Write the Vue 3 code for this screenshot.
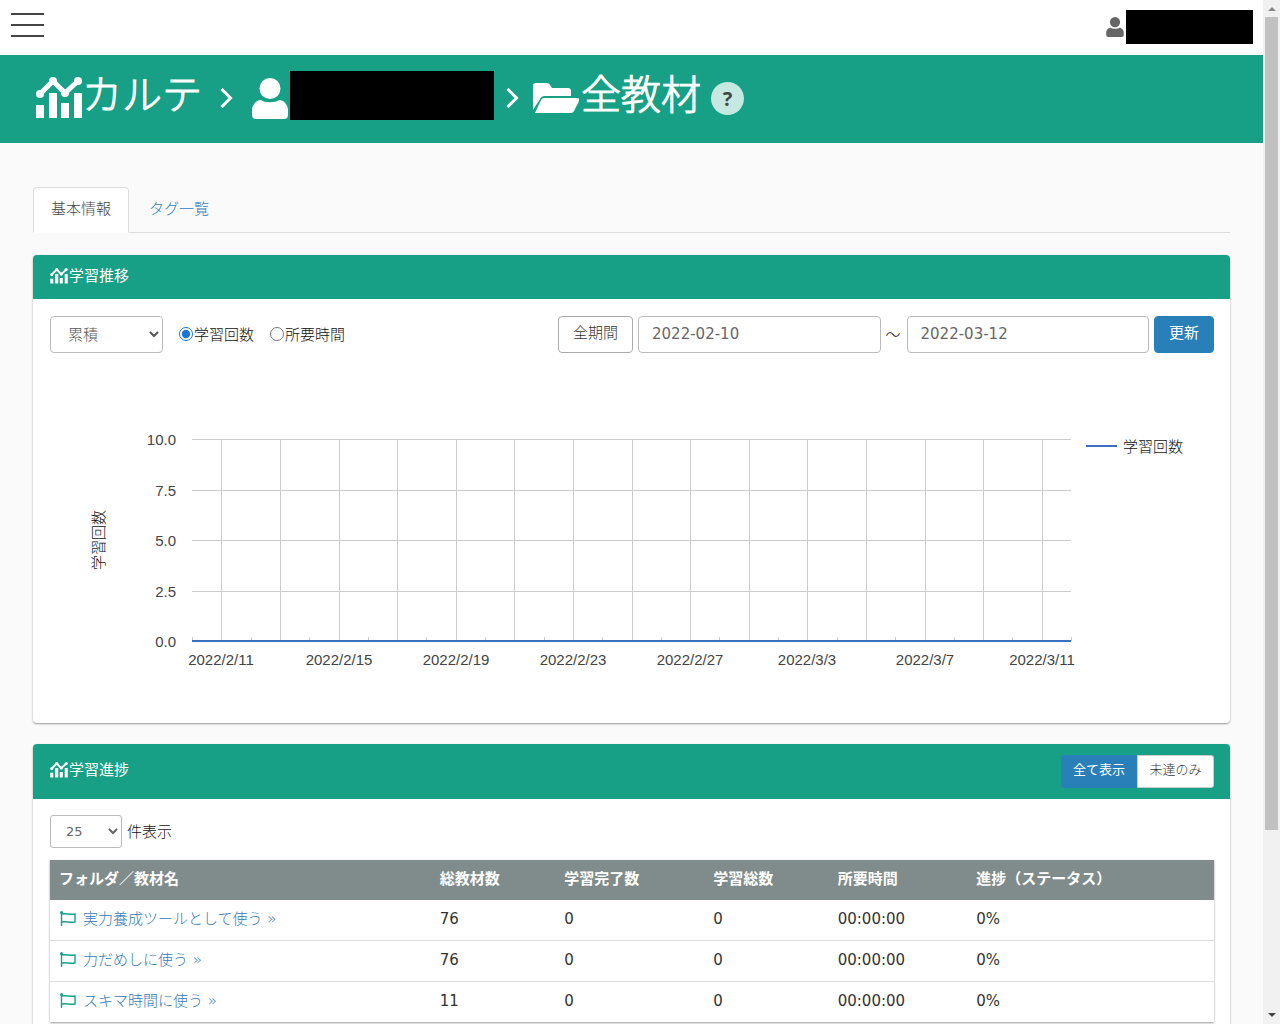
<script setup>
import { ref } from 'vue'

const mode = ref('total')
const metric = ref('count')
const from = ref('2022-02-10')
const to = ref('2022-03-12')
const perPage = ref('25')

const yTicks = ['10.0', '7.5', '5.0', '2.5', '0.0']
const xLabels = ['2022/2/11', '2022/2/15', '2022/2/19', '2022/2/23', '2022/2/27', '2022/3/3', '2022/3/7', '2022/3/11']
const dayX = (day) => Math.round(142 + (879 * day) / 30)
const majorDays = Array.from({ length: 15 }, (_, i) => 1 + i * 2)
const minorDays = Array.from({ length: 16 }, (_, i) => i * 2)
const tickY = [69, 120, 170, 221, 271]

const rows = [
  { name: '実力養成ツールとして使う »', total: 76 },
  { name: '力だめしに使う »', total: 76 },
  { name: 'スキマ時間に使う »', total: 11 }
]
</script>

<template>
  <svg class="defs" aria-hidden="true">
    <symbol id="i-chart" viewBox="0 0 46 42">
      <path d="M4 17 17 4 29 16 42 4" fill="none" stroke="currentColor" stroke-width="5" />
      <circle cx="4" cy="17" r="4" /><circle cx="17" cy="4" r="4" /><circle cx="29" cy="16" r="4" /><circle cx="42" cy="4" r="4" />
      <path d="M0 28h8v13H0zM13 16h8v25h-8zM25 26h8v15h-8zM38 16h8v25h-8z" />
    </symbol>
    <symbol id="i-user" viewBox="0 0 36 41">
      <circle cx="18" cy="10.500" r="10.500" />
      <path d="M9 22c3 3 15 3 18 0 5 0 9 5 9 10v5q0 4-4 4H4q-4 0-4-4v-5c0-5 4-10 9-10z" />
    </symbol>
    <symbol id="i-folder" viewBox="0 0 46 30">
      <path d="M0 27V3q0-3 3-3h11q2 0 3 2l2 3h16q3 0 3 3v5H12q-4 0-5 3z" />
      <path d="M2 30 8 17q1-2 3-2h33q3 0 2 3l-5 10q-1 2-3 2z" />
    </symbol>
    <symbol id="i-angle" viewBox="0 0 12 20">
      <path d="M1 1 10 10 1 19" fill="none" stroke="currentColor" stroke-width="3" />
    </symbol>
    <symbol id="i-flag" viewBox="0 0 16 16">
      <path d="M1.500 1v14M2 3c4-1 8 1 13 0v8c-5 1-9-1-13 0" fill="none" stroke="currentColor" stroke-width="1.400" />
      <circle cx="1.500" cy="1.500" r="1.500" />
    </symbol>
  </svg>

  <div class="frame" lang="ja">
    <div class="page">
      <nav class="topbar">
        <button class="menu" type="button" aria-label="menu"><span></span><span></span><span></span></button>
        <div class="account">
          <svg><use href="#i-user" /></svg>
          <span class="masked"></span>
        </div>
      </nav>

      <header class="hero">
        <h1>
          <svg class="ic-chart"><use href="#i-chart" /></svg>
          <span>カルテ</span>
          <svg class="ic-angle"><use href="#i-angle" /></svg>
          <svg class="ic-user"><use href="#i-user" /></svg>
          <span class="masked"></span>
          <svg class="ic-angle second"><use href="#i-angle" /></svg>
          <svg class="ic-folder"><use href="#i-folder" /></svg>
          <span>全教材</span>
          <button class="help" type="button">?</button>
        </h1>
      </header>

      <main>
        <div class="tabs">
          <a href="#basic" class="active">基本情報</a>
          <a href="#tags">タグ一覧</a>
        </div>

        <section class="panel">
          <h2><svg><use href="#i-chart" /></svg>学習推移</h2>
          <div class="body">
            <form class="controls" @submit.prevent>
              <select v-model="mode" class="field" aria-label="集計">
                <option value="total">累積</option>
              </select>
              <label><input v-model="metric" type="radio" value="count" />学習回数</label>
              <label><input v-model="metric" type="radio" value="time" />所要時間</label>
              <div class="range">
                <button type="button" class="btn">全期間</button>
                <input v-model="from" class="field" type="text" aria-label="開始日" />
                <span class="wave">～</span>
                <input v-model="to" class="field" type="text" aria-label="終了日" />
                <button type="submit" class="btn primary">更新</button>
              </div>
            </form>
            <svg class="chart" viewBox="0 0 1164 336">
              <g class="grid">
                <line v-for="y in tickY" :key="y" x1="142" x2="1021" :y1="y" :y2="y" />
                <line v-for="d in majorDays" :key="d" :x1="dayX(d)" :x2="dayX(d)" y1="69" y2="271" />
                <line v-for="d in minorDays" :key="d" :x1="dayX(d)" :x2="dayX(d)" y1="267" y2="271" />
              </g>
              <line class="series" x1="142" x2="1021" y1="271" y2="271" />
              <text v-for="(t, i) in yTicks" :key="t" class="tick" x="126" :y="tickY[i] + 6" text-anchor="end">{{ t }}</text>
              <text v-for="(t, i) in xLabels" :key="t" class="tick" :x="dayX(1 + i * 4)" y="295" text-anchor="middle">{{ t }}</text>
              <text class="name" transform="translate(54 170) rotate(-90)" text-anchor="middle">学習回数</text>
              <line class="series" x1="1036" x2="1067" y1="76" y2="76" />
              <text class="name" x="1073" y="82">学習回数</text>
            </svg>
          </div>
        </section>

        <section class="panel">
          <h2 class="tall">
            <svg><use href="#i-chart" /></svg>学習進捗
            <span class="group">
              <button type="button" class="on">全て表示</button><button type="button">未達のみ</button>
            </span>
          </h2>
          <div class="body">
            <label class="length">
              <select v-model="perPage">
                <option>25</option>
              </select>
              件表示
            </label>
            <table>
              <colgroup>
                <col class="c1" /><col class="c2" /><col class="c3" /><col class="c2" /><col class="c4" /><col />
              </colgroup>
              <thead>
                <tr>
                  <th>フォルダ／教材名</th><th>総教材数</th><th>学習完了数</th><th>学習総数</th><th>所要時間</th><th>進捗（ステータス）</th>
                </tr>
              </thead>
              <tbody>
                <tr v-for="r in rows" :key="r.name">
                  <td><a href="#folder"><svg><use href="#i-flag" /></svg>{{ r.name }}</a></td>
                  <td>{{ r.total }}</td><td>0</td><td>0</td><td>00:00:00</td><td>0%</td>
                </tr>
              </tbody>
            </table>
          </div>
        </section>
      </main>
    </div>
    <div class="scrollbar" aria-hidden="true">
      <i class="up"></i>
      <span class="thumb"></span>
      <i class="down"></i>
    </div>
  </div>
</template>

<style>
body { background: #fafafa; }
</style>

<style scoped>
* { box-sizing: border-box; }
.defs { display: none; }
svg { fill: currentColor; flex: none; }
button, input, select { font: inherit; color: inherit; }
.frame {
  display: flex;
  height: 100vh;
  overflow: hidden;
  font: 300 15px/22px "DejaVu Sans", "Noto Sans CJK JP", sans-serif;
  color: #111;
}
.page { flex: 1; min-width: 0; overflow: hidden; }
.masked { background: #000; }

.topbar {
  display: flex;
  align-items: center;
  justify-content: space-between;
  height: 55px;
  padding: 0 10px 2px 11px;
  background: #fff;
}
.menu {
  display: flex;
  flex-direction: column;
  gap: 9px;
  width: 33px;
  margin-bottom: 4px;
  padding: 0;
  border: 0;
  background: none;
}
.menu span { height: 2px; background: #444; }
.account { display: flex; align-items: center; gap: 2px; color: #666; }
.account svg { width: 18px; height: 20px; }
.account .masked { width: 127px; height: 34px; }

.hero { height: 88px; padding: 0 36px; background: #18a087; color: #fff; }
h1 {
  display: flex;
  align-items: center;
  height: 80px;
  margin: 0;
  font-size: 40px;
  font-weight: 300;
  line-height: 56px;
}
h1 span { white-space: nowrap; -webkit-text-stroke: 1px #fff; }
h1 .masked { width: 204px; height: 49px; margin-left: 2px; }
.ic-chart { width: 46px; height: 42px; margin-top: 6px; }
.ic-angle { width: 13px; height: 20px; margin: 6px 19px 0 18px; }
.ic-angle.second { margin: 6px 14px 0 12px; }
.ic-user { width: 36px; height: 41px; margin-top: 6px; }
.ic-folder { width: 46px; height: 30px; margin: 6px 2px 0 0; }
.help {
  width: 33px;
  height: 33px;
  margin: 7px 0 0 10px;
  padding: 0;
  border: 0;
  border-radius: 50%;
  background: #c5e8e1;
  color: #444;
  font: 700 20px/33px "Noto Sans", sans-serif;
}

main { padding: 44px 33px 0; }
.tabs { display: flex; gap: 2px; height: 46px; margin-bottom: 22px; border-bottom: 1px solid #ddd; }
.tabs a {
  height: 46px;
  padding: 10px 17px 0;
  border: 1px solid transparent;
  border-radius: 4px 4px 0 0;
  color: #337ab7;
  text-decoration: none;
}
.tabs a.active { background: #fff; border-color: #ddd; border-bottom-color: #fff; color: #444; }

.panel {
  margin-bottom: 21px;
  border-radius: 4px;
  background: #fff;
  box-shadow: 0 1px 2px rgba(0, 0, 0, 0.4);
}
h2 {
  display: flex;
  align-items: center;
  height: 44px;
  margin: 0;
  padding: 0 16px 3px 17px;
  border-radius: 4px 4px 0 0;
  background: #18a087;
  color: #fff;
  font-size: 15px;
  font-weight: 400;
}
h2 svg { width: 18px; height: 16px; margin-right: 1px; }
h2.tall { height: 55px; }
.group { display: flex; margin-left: auto; padding-top: 3px; }
.group button {
  width: 77px;
  height: 33px;
  padding: 0 0 4px;
  border: 1px solid #ccc;
  border-radius: 0 3px 3px 0;
  background: #fff;
  color: #333;
  font-size: 13px;
  font-weight: 300;
}
.group .on { width: 76px; border-color: #2980b9; border-radius: 3px 0 0 3px; background: #2980b9; color: #fff; font-weight: 400; }

.body { padding: 17px 16px 17px 17px; }
.controls { display: flex; align-items: center; height: 37px; }
.controls label { display: flex; align-items: center; margin-left: 16px; }
.controls label input { width: 14px; height: 14px; margin: 0 1px 2px 0; accent-color: #1976d2; }
.field {
  height: 37px;
  padding: 0 13px 1px;
  border: 1px solid #bbb;
  border-radius: 4px;
  background: #fff;
  color: #555;
}
select.field { width: 113px; padding-bottom: 0; }
.range { display: flex; align-items: center; gap: 5px; flex: 1; margin-left: 213px; }
.range .field { flex: 1; min-width: 0; font-weight: 400; color: #666; }
.wave { width: 16px; white-space: nowrap; }
.btn {
  height: 37px;
  padding: 0 13px 4px;
  border: 1px solid #aaa;
  border-radius: 4px;
  background: #fff;
  color: #333;
  white-space: nowrap;
}
.btn:first-child { width: 75px; }
.btn.primary { width: 60px; border-color: #2980b9; background: #2980b9; color: #fff; font-weight: 400; }

.chart { display: block; width: 100%; margin-top: 17px; }
.grid line { stroke: #ccc; stroke-width: 1; shape-rendering: crispEdges; }
.series { stroke: #3b6fc0; stroke-width: 2; }
.tick { font: 400 15px "Liberation Sans", sans-serif; fill: #444; }
.name { font: 300 15px "Noto Sans CJK JP", sans-serif; fill: #111; }

.length { display: flex; align-items: center; gap: 5px; height: 33px; margin: -1px 0 12px; }
.length select {
  width: 72px;
  height: 33px;
  padding: 0 11px;
  border: 1px solid #bbb;
  border-radius: 3px;
  background: #fff;
  color: #666;
  font-size: 13px;
  font-weight: 400;
}
table { width: 100%; border-collapse: collapse; table-layout: fixed; box-shadow: 0 1px 2px rgba(0, 0, 0, 0.4); }
.c1 { width: 32.7%; }
.c2 { width: 10.7%; }
.c3 { width: 12.8%; }
.c4 { width: 11.9%; }
th, td { height: 40px; padding: 0 9px 3px; text-align: left; white-space: nowrap; }
th { background: #7f8c8b; color: #fff; font-weight: 700; }
td { padding-bottom: 1px; font-weight: 400; color: #333; }
td:first-child { font-weight: 300; }
tbody tr + tr td { height: 41px; border-top: 1px solid #ddd; }
td a { display: flex; align-items: center; gap: 6px; color: #337ab7; text-decoration: none; }
td svg { width: 18px; height: 16px; color: #18a087; }

.scrollbar {
  display: flex;
  flex-direction: column;
  align-items: center;
  justify-content: space-between;
  width: 17px;
  padding: 7px 0;
  background: #f1f1f1;
}
.thumb { width: 13px; height: 813px; margin: 6px 0 auto; background: #c1c1c1; }
.up, .down { width: 0; height: 0; border: 4px solid transparent; }
.up { border-top: 0; border-bottom-color: #888; }
.down { border-bottom: 0; border-top-color: #444; }
</style>
